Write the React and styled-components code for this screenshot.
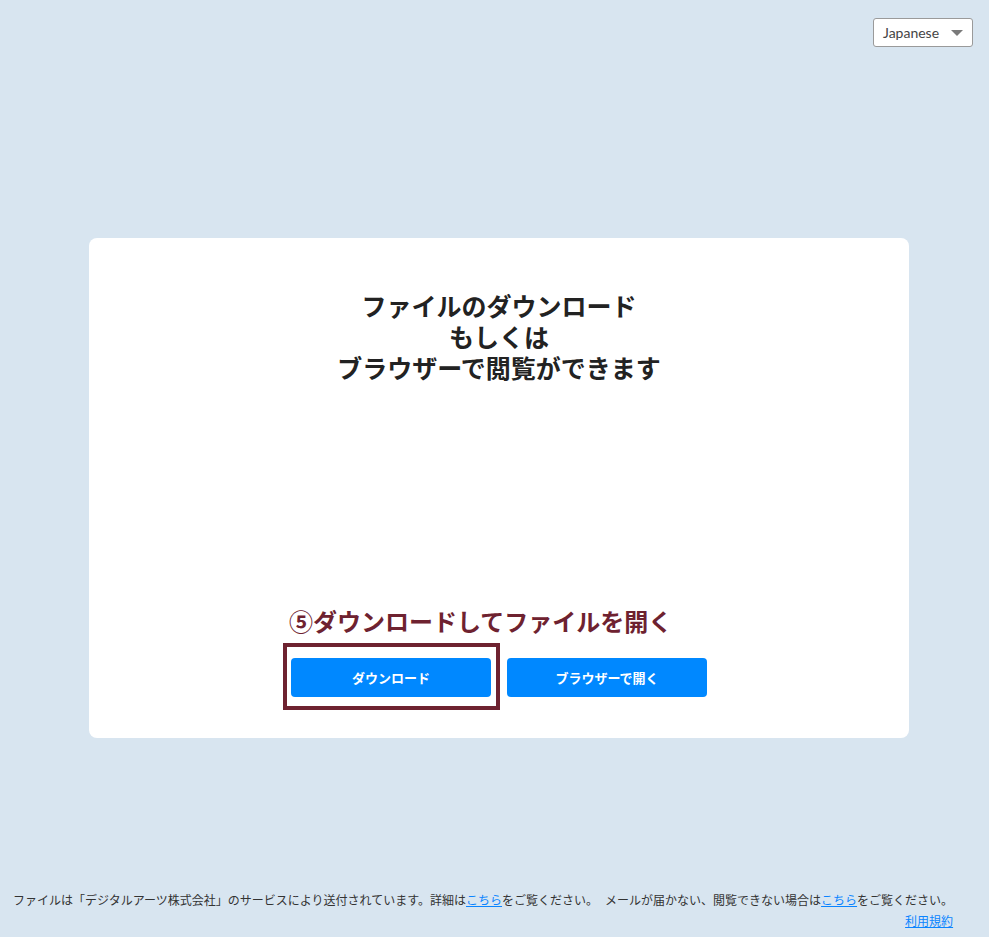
import styled, { createGlobalStyle } from 'styled-components';

const GlobalStyle = createGlobalStyle`
  html, body {
    margin: 0;
    padding: 0;
    background: #d8e5f0;
  }
  body {
    font-family: "Noto Sans CJK JP", "Noto Sans", sans-serif;
    color: #333;
  }
`;

const Page = styled.div`
  display: flex;
  flex-direction: column;
  min-height: 100vh;
  box-sizing: border-box;
`;

const Header = styled.div`
  display: flex;
  justify-content: flex-end;
  padding: 18px 16px 0 0;
`;

const LangSelect = styled.div`
  position: relative;
  display: flex;
  align-items: center;
  box-sizing: border-box;
  width: 100px;
  height: 29px;
  padding: 0 0 0 9px;
  background: #fff;
  border: 1px solid #9a9a9a;
  border-radius: 3px;
  font-family: Lato, "Open Sans", sans-serif;
  font-size: 14px;
  color: #444;
`;

const Arrow = styled.span`
  position: absolute;
  right: 9px;
  top: 11px;
  width: 0;
  height: 0;
  border-left: 6px solid transparent;
  border-right: 6px solid transparent;
  border-top: 6px solid #7a7a7a;
`;

const Card = styled.div`
  display: flex;
  flex-direction: column;
  align-items: center;
  box-sizing: border-box;
  width: 820px;
  height: 500px;
  margin: 191px 0 0 89px;
  padding: 52px 0 41px;
  background: #fff;
  border-radius: 8px;
`;

const Title = styled.h1`
  margin: 0;
  font-size: 25px;
  line-height: 31px;
  font-weight: 700;
  color: #222;
  text-align: center;
`;

const TitleLine = styled.span`
  display: block;
  height: 31px;
`;

const Actions = styled.div`
  margin-top: auto;
  display: flex;
  flex-direction: column;
  align-items: flex-start;
`;

const Note = styled.div`
  margin: 0 0 22px -2px;
  font-size: 24px;
  line-height: 30px;
  font-weight: 700;
  color: #6e2230;
  white-space: nowrap;
`;

const ButtonRow = styled.div`
  display: flex;
  gap: 16px;
`;

const ButtonWrap = styled.div`
  position: relative;
`;

const Highlight = styled.div`
  position: absolute;
  left: -8px;
  top: -15px;
  right: -9px;
  bottom: -13px;
  border: 4px solid #6e2230;
  pointer-events: none;
`;

const Button = styled.button`
  width: 200px;
  height: 39px;
  border: 0;
  border-radius: 4px;
  background: #0088ff;
  color: #fff;
  font-family: "Noto Sans CJK JP", sans-serif;
  font-size: 13px;
  font-weight: 700;
  cursor: pointer;
`;

const Footer = styled.footer`
  margin-top: auto;
  padding: 0 0 6px 13px;
`;

const FooterInner = styled.div`
  display: inline-flex;
  flex-direction: column;
  font-size: 12px;
  line-height: 21px;
  color: #333;
`;

const FooterLine = styled.div`
  white-space: nowrap;
`;

const Spacer = styled.span`
  display: inline-block;
  width: 7px;
`;

const Link = styled.a`
  color: #0a84ff;
  text-decoration: underline;
  cursor: pointer;
`;

const TermsLine = styled.div`
  text-align: right;
`;

export default function App() {
  return (
    <Page>
      <GlobalStyle />
      <Header>
        <LangSelect>
          Japanese
          <Arrow />
        </LangSelect>
      </Header>
      <Card>
        <Title>
          <TitleLine>ファイルのダウンロード</TitleLine>
          <TitleLine>もしくは</TitleLine>
          <TitleLine>ブラウザーで閲覧ができます</TitleLine>
        </Title>
        <Actions>
          <Note>⑤ダウンロードしてファイルを開く</Note>
          <ButtonRow>
            <ButtonWrap>
              <Button>ダウンロード</Button>
              <Highlight />
            </ButtonWrap>
            <ButtonWrap>
              <Button>ブラウザーで開く</Button>
            </ButtonWrap>
          </ButtonRow>
        </Actions>
      </Card>
      <Footer>
        <FooterInner>
          <FooterLine>
            ファイルは「デジタルアーツ株式会社」のサービスにより送付されています。詳細は
            <Link>こちら</Link>をご覧ください。
            <Spacer />
            メールが届かない、閲覧できない場合は<Link>こちら</Link>をご覧ください。
          </FooterLine>
          <TermsLine>
            <Link>利用規約</Link>
          </TermsLine>
        </FooterInner>
      </Footer>
    </Page>
  );
}
